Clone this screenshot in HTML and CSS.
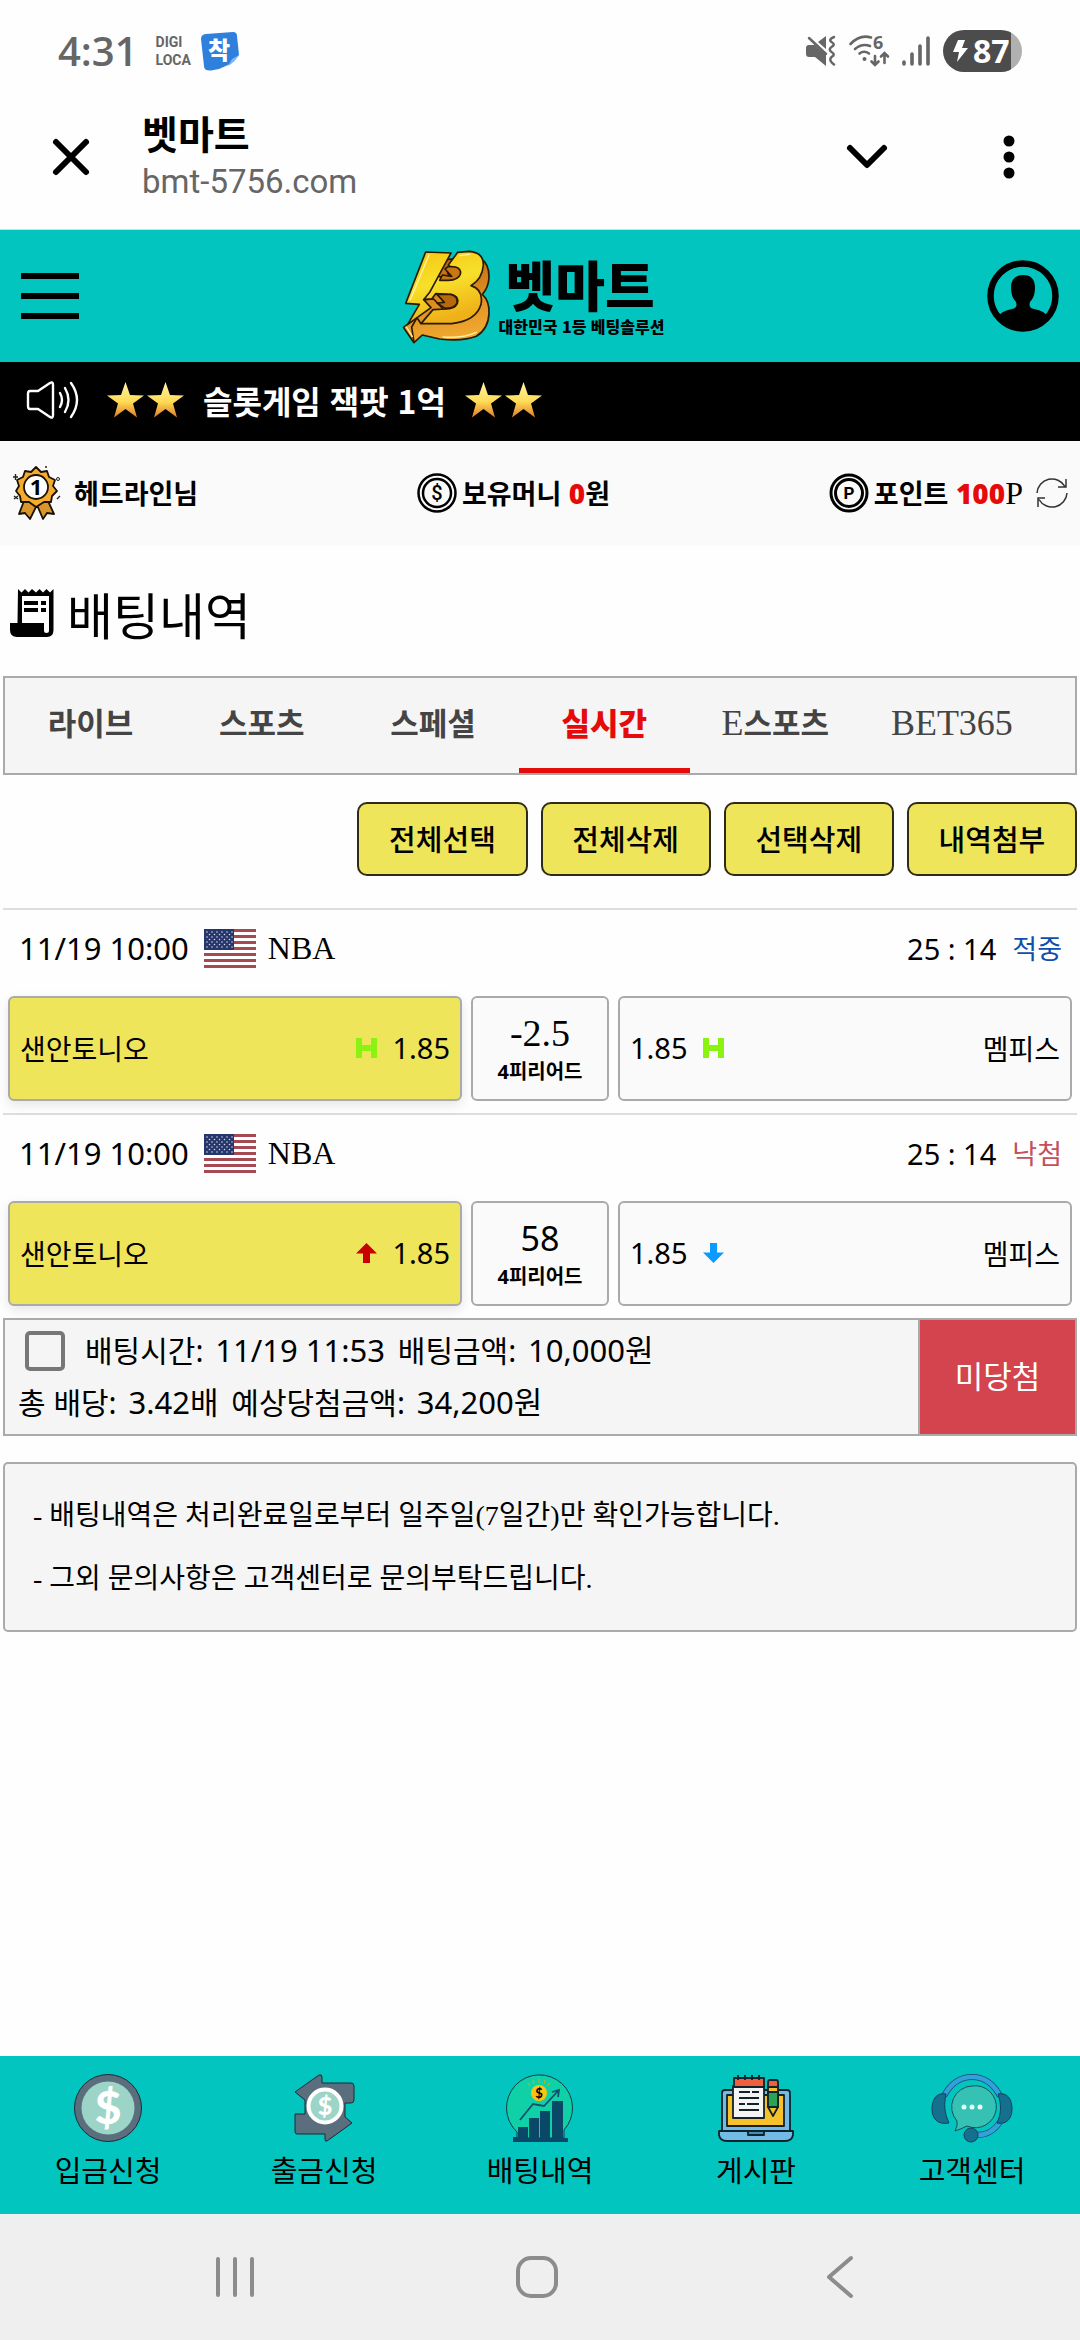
FILE: index.html
```html
<!DOCTYPE html>
<html lang="ko">
<head>
  <meta charset="UTF-8">
  <meta name="viewport" content="width=device-width, initial-scale=1.0">
  <title>벳마트</title>
  <link rel="stylesheet" href="styles.css">
</head>
<body>
  <svg class="defs" width="0" height="0" aria-hidden="true">
    <defs>
      <linearGradient id="starFill" x1="0" y1="0" x2="0" y2="1">
        <stop offset="0" stop-color="#fff3a8"/>
        <stop offset="0.55" stop-color="#ffdc55"/>
        <stop offset="1" stop-color="#e07a2c"/>
      </linearGradient>
      <linearGradient id="goldFill" x1="0" y1="0" x2="0.3" y2="1">
        <stop offset="0" stop-color="#f5c512"/>
        <stop offset="0.5" stop-color="#f7e02a"/>
        <stop offset="1" stop-color="#efb018"/>
      </linearGradient>
      <linearGradient id="amberFill" x1="0" y1="0" x2="0.2" y2="1">
        <stop offset="0" stop-color="#b8620c"/>
        <stop offset="0.6" stop-color="#dd8f22"/>
        <stop offset="1" stop-color="#f0a830"/>
      </linearGradient>
    </defs>
    <symbol id="star" viewBox="0 0 37 36">
      <path fill="url(#starFill)" d="M18.500 0 L23 13 L37 13.500 L26 21.500 L30 35.500 L18.500 27 L7 35.500 L11 21.500 L0 13.500 L14 13 Z"/>
    </symbol>
    <symbol id="flag" viewBox="0 0 52 39">
      <path fill="#fff" d="M0 0H52V39H0Z"/>
      <path stroke="#a54a52" stroke-width="3" d="M0 1.500H52M0 7.500H52M0 13.500H52M0 19.500H52M0 25.500H52M0 31.500H52M0 37.500H52"/>
      <path fill="#26366b" d="M0 0H30V21H0Z"/>
      <path stroke="#d5d9e6" stroke-width="1.600" stroke-linecap="round" stroke-dasharray="0 5" d="M3 3H29M5.500 5.500H27M3 8H29M5.500 10.500H27M3 13H29M5.500 15.500H27M3 18H29"/>
    </symbol>
    <symbol id="handi" viewBox="0 0 21 20">
      <path fill="#8bf312" d="M0 0H6V7H15V0H21V20H15V13H6V20H0Z"/>
    </symbol>
  </svg>

  <div class="status-bar">
    <div class="status-left">
      <span class="clock">4:31</span>
      <span class="digi">DIGI<br>LOCA</span>
      <svg width="38" height="39" viewBox="0 0 38 39">
        <path fill="#2f7fdc" d="M5 2 L32 0 Q36 0 36 4 L38 23 Q29 36 10 38.500 Q3 39 3 34 L0 7 Q0 2.500 5 2Z"/>
        <path fill="#7fb7f2" d="M38 23 Q33 31 27 34 L31 27Z"/>
        <text class="chak" x="7" y="27">착</text>
      </svg>
    </div>
    <div class="status-right">
      <svg width="30" height="30" viewBox="0 0 30 30">
        <path fill="#666" d="M0 12Q0 9 3 9H9L20 19V30L9 21H3Q0 21 0 18ZM12 6L20 0V13Z"/>
        <path fill="none" stroke="#666" stroke-width="2.500" stroke-linecap="round" d="M3 2L20 18M28 1Q22 3.500 25.500 6Q30 8.500 25.500 11Q22 13.500 25.500 16Q30 18.500 25.500 21Q22 24 28 28.500"/>
      </svg>
      <svg width="40" height="32" viewBox="0 0 40 32">
        <path fill="none" stroke="#666" stroke-width="2.600" stroke-linecap="round" d="M1.500 9Q11 -1 22 2.500M6 14Q13 8 21 11M10.500 18.500Q15 15 20 18.500M26 21V29.500M22.500 26.500L26 30L29.500 26.500M35.500 28V19M32 21.500L35.500 18L39 21.500"/>
        <circle cx="15.500" cy="24" r="2" fill="#666"/>
        <text class="wifi-six" x="24" y="14">6</text>
      </svg>
      <svg width="28" height="30" viewBox="0 0 28 30">
        <path stroke="#666" stroke-width="3.600" stroke-linecap="round" d="M2 26V28M10 18V28M18 10V28M26 2V28"/>
      </svg>
      <span class="battery">
        <svg width="15" height="22" viewBox="0 0 15 22"><path fill="#fff" d="M5 0H12L9 8H15L4 22L6 12H0Z"/></svg>87
      </span>
    </div>
  </div>

  <div class="browser-bar">
    <button class="plain close" aria-label="닫기">
      <svg width="36" height="36" viewBox="0 0 36 36"><path stroke="#000" stroke-width="6" stroke-linecap="round" d="M3 3L33 33M33 3L3 33"/></svg>
    </button>
    <div class="page-info">
      <strong>벳마트</strong>
      <span>bmt-5756.com</span>
    </div>
    <button class="plain" aria-label="펼치기">
      <svg width="40" height="24" viewBox="0 0 40 24"><path fill="none" stroke="#000" stroke-width="6" stroke-linecap="round" stroke-linejoin="round" d="M3 3L20 20L37 3"/></svg>
    </button>
    <button class="plain more" aria-label="더보기">
      <svg width="12" height="44" viewBox="0 0 12 44"><circle cx="6" cy="6" r="5.500"/><circle cx="6" cy="22" r="5.500"/><circle cx="6" cy="38" r="5.500"/></svg>
    </button>
  </div>

  <header class="site-header">
    <button class="plain" aria-label="메뉴">
      <svg width="58" height="46" viewBox="0 0 58 46"><path d="M0 0H58V6H0ZM0 20H58V26H0ZM0 40H58V46H0Z"/></svg>
    </button>
    <a href="#" class="logo">
      <svg width="88" height="95" viewBox="67 56 264 285">
        <g stroke="#2b1a04" stroke-width="5" stroke-linejoin="round">
          <path fill="url(#amberFill)" d="M150 90L300 82Q330 100 328 142Q326 172 308 192Q330 212 328 250Q326 296 290 318Q250 334 180 326L128 314L103 337L71 291L112 262Z"/>
          <path fill="url(#goldFill)" d="M138 65L214 68L176 138L216 148L204 128L214 112L206 104L234 66L268 63Q312 66 311 104Q308 146 274 166Q312 178 304 222Q290 272 216 280L124 280L160 238L200 236Q238 232 234 208Q230 192 204 192L168 190L156 206L132 208L154 232L84 282L119 222L78 219Z"/>
          <path fill="#c97714" d="M206 108L228 110Q246 116 242 132Q236 150 206 150L180 150L188 134L216 138L196 116Z"/>
          <path fill="#b8680f" d="M172 192L214 192Q236 198 232 218Q224 234 196 234L172 218L194 216Z"/>
        </g>
        <path fill="none" stroke="#2b1a04" stroke-width="5" stroke-linejoin="round" d="M176 138L150 186L132 208L162 206L190 236M112 262L96 290L103 337M112 262L124 280"/>
        <path fill="none" stroke="#fff3a0" stroke-width="4" stroke-linecap="round" d="M148 74L92 208M240 76L270 72M80 290L98 318M190 320Q250 324 290 306"/>
      </svg>
      <span class="logo-text">
        <strong>벳마트</strong>
        <small>대한민국 1등 베팅솔루션</small>
      </span>
    </a>
    <button class="plain" aria-label="내 정보">
      <svg width="72" height="72" viewBox="0 0 72 72">
        <circle cx="36" cy="36" r="32.500" fill="none" stroke="#000" stroke-width="6.500"/>
        <path d="M36 15Q48 15 48 28Q48 37 43 42Q41 48 47 49Q58 51 61 57Q52 71 36 71Q20 71 11 57Q14 51 25 49Q31 48 29 42Q24 37 24 28Q24 15 36 15Z"/>
      </svg>
    </button>
  </header>

  <div class="ticker">
    <svg width="54" height="38" viewBox="0 0 54 38">
      <path fill="none" stroke="#fff" stroke-width="2.400" stroke-linejoin="round" stroke-linecap="round" d="M4 10H12L24 2Q27 0 27 4V34Q27 38 24 36L12 28H4Q2 28 2 25V13Q2 10 4 10ZM34 12Q38 19 34 26M39 7Q46 19 39 31M45 2Q57 19 45 36"/>
    </svg>
    <p>
      <span class="stars"><svg width="37" height="36"><use href="#star"/></svg><svg width="37" height="36"><use href="#star"/></svg></span>
      <span>슬롯게임 잭팟 1억</span>
      <span class="stars"><svg width="37" height="36"><use href="#star"/></svg><svg width="37" height="36"><use href="#star"/></svg></span>
    </p>
  </div>

  <div class="user-bar">
    <div class="user-item name">
      <svg width="48" height="54" viewBox="0 0 48 54">
        <g stroke="#1a1205" stroke-width="1.800" stroke-linejoin="round">
          <path fill="#d9962b" d="M12 35L7 48L13 47L18 53L25 39L31 53L35 47L42 48L36 35Z"/>
          <path fill="#f5ab2e" d="M24 1L29 6L35 5L37 11L43 14L41 20L45 25L40 30L39 36L32 36L24 41L17 36L9 36L8 30L4 25L7 20L5 14L11 11L13 5L19 6Z"/>
          <circle cx="24" cy="21" r="12" fill="#fff"/>
        </g>
        <path fill="none" stroke="#222" stroke-width="1.400" d="M1 11H6M3.500 8V14M45 33L48 30M2 30L6 33M6 30L2 33M33 1H35"/>
        <circle cx="46" cy="13" r="1.500" fill="none" stroke="#222"/>
        <text class="medal-no" x="24" y="29" text-anchor="middle">1</text>
      </svg>
      <span>헤드라인님</span>
    </div>
    <div class="user-item">
      <svg width="40" height="40" viewBox="0 0 40 40">
        <g fill="none" stroke="#000"><circle cx="20" cy="20" r="18.500" stroke-width="2.500"/><circle cx="20" cy="20" r="14" stroke-width="2.500"/></g>
        <text class="coin-sign" x="20" y="27" text-anchor="middle">$</text>
      </svg>
      <span>보유머니 <b>0</b>원</span>
    </div>
    <div class="user-item">
      <svg width="40" height="40" viewBox="0 0 40 40">
        <g fill="none" stroke="#000"><circle cx="20" cy="20" r="18" stroke-width="3"/><circle cx="20" cy="20" r="13.500" stroke-width="3"/></g>
        <text class="coin-sign coin-p" x="20" y="26" text-anchor="middle">P</text>
      </svg>
      <span>포인트 <b>100</b><i>P</i></span>
      <button class="plain refresh" aria-label="새로고침">
        <svg width="32" height="32" viewBox="0 0 32 32"><path fill="none" stroke="#333" stroke-width="1.500" d="M1 16A15 15 0 0 1 29 9.500M31 16A15 15 0 0 1 3 22.500M30 2V10H22M2 30V21H9"/></svg>
      </button>
    </div>
  </div>

  <main>
    <h1>
      <svg width="44" height="48" viewBox="0 0 44 48">
        <path fill-rule="evenodd" d="M8 0L11.500 3.500L15 0L18.500 3.500L22 0L26 3.500L29.500 0L33 3.500L36.500 0L40 3.500L43.500 0V41Q43.500 48 37 48H7Q0 48 0 41V34H7.500ZM12 7V34H34V42Q34 44 36.500 44Q39 44 39 42V7Z"/>
        <path d="M14 12H28V16H14ZM31 12H36V16H31ZM14 19H28V23H14ZM31 19H36V23H31Z"/>
      </svg>
      배팅내역
    </h1>

    <nav class="tabs">
      <a href="#">라이브</a>
      <a href="#">스포츠</a>
      <a href="#">스페셜</a>
      <a href="#" class="active">실시간</a>
      <a href="#"><i>E</i>스포츠</a>
      <a href="#"><i>BET365</i></a>
    </nav>

    <div class="actions">
      <button type="button">전체선택</button>
      <button type="button">전체삭제</button>
      <button type="button">선택삭제</button>
      <button type="button">내역첨부</button>
    </div>

    <section class="bet">
      <div class="bet-head">
        <time>11/19 10:00</time>
        <svg width="52" height="39"><use href="#flag"/></svg>
        <span class="league">NBA</span>
        <span class="score">25 : 14</span>
        <span class="win">적중</span>
      </div>
      <div class="bet-row">
        <div class="cell home picked">
          <span class="team">샌안토니오</span>
          <svg width="21" height="20"><use href="#handi"/></svg>
          <span class="odds">1.85</span>
        </div>
        <div class="cell line"><span class="point serif">-2.5</span><small>4피리어드</small></div>
        <div class="cell away">
          <span class="odds">1.85</span>
          <svg width="21" height="20"><use href="#handi"/></svg>
          <span class="team">멤피스</span>
        </div>
      </div>
    </section>

    <section class="bet">
      <div class="bet-head">
        <time>11/19 10:00</time>
        <svg width="52" height="39"><use href="#flag"/></svg>
        <span class="league">NBA</span>
        <span class="score">25 : 14</span>
        <span class="lose">낙첨</span>
      </div>
      <div class="bet-row">
        <div class="cell home picked">
          <span class="team">샌안토니오</span>
          <svg width="21" height="20" viewBox="0 0 21 20"><path fill="#c90000" d="M10.500 0L21 10.500H14V20H7V10.500H0Z"/></svg>
          <span class="odds">1.85</span>
        </div>
        <div class="cell line"><span class="point">58</span><small>4피리어드</small></div>
        <div class="cell away">
          <span class="odds">1.85</span>
          <svg width="21" height="20" viewBox="0 0 21 20"><path fill="#0a9bff" d="M10.500 20L21 9.500H14V0H7V9.500H0Z"/></svg>
          <span class="team">멤피스</span>
        </div>
      </div>
    </section>

    <div class="summary">
      <div class="summary-info">
        <div class="summary-line">
          <input type="checkbox" id="bet1">
          <label for="bet1">배팅시간: <span class="val">11/19 11:53</span> 배팅금액: <span class="val">10,000원</span></label>
        </div>
        <div>총 배당: <span class="val">3.42배</span> 예상당첨금액: <span class="val">34,200원</span></div>
      </div>
      <div class="result">미당첨</div>
    </div>

    <div class="guide">
      <p>- 배팅내역은 처리완료일로부터 일주일(7일간)만 확인가능합니다.</p>
      <p>- 그외 문의사항은 고객센터로 문의부탁드립니다.</p>
    </div>
  </main>

  <nav class="bottom-menu">
    <a href="#">
      <svg width="68" height="68" viewBox="0 0 68 68">
        <circle cx="34" cy="34" r="33.500" fill="#5b6e7d" stroke="#1c2a33"/>
        <circle cx="34" cy="34" r="26.500" fill="#9cd5c8"/>
        <text class="dollar-lg" x="34" y="50" text-anchor="middle">$</text>
      </svg>
      입금신청
    </a>
    <a href="#">
      <svg width="60" height="68" viewBox="0 0 60 68">
        <path fill="#5b6e7d" stroke="#1c2a33" d="M1 18L25 1Q28 0 28 3V9H57Q60 9 60 12V26Q60 29 57 29H51V43L58 49L33 67Q31 68 31 65V60H3Q1 60 1 57V40H11V26Z"/>
        <circle cx="31" cy="32" r="16.500" fill="#9cd5c8" stroke="#fff" stroke-width="4"/>
        <text class="dollar-sm" x="31" y="41" text-anchor="middle">$</text>
      </svg>
      출금신청
    </a>
    <a href="#">
      <svg width="68" height="68" viewBox="0 0 68 68">
        <path fill="#0fd0a6" stroke="#143a44" d="M11 58A33 33 0 1 1 58 56V64H11Z"/>
        <path fill="#0a4868" d="M12 53H22V64H23V44H33V64H34V37H44V64H46V27H57V64H62V68H7V63H12Z"/>
        <path fill="none" stroke="#12506b" stroke-width="1.800" d="M14 46L27 30L38 32L52 17M46 18L53 16L52 23"/>
        <path stroke="#c6b31c" d="M24 12L22 9M28 10L27 6M33 9V5M38 10L39 6M41 12L44 9"/>
        <circle cx="33" cy="19" r="8" fill="#fcc313"/>
        <text class="dollar-xs" x="33" y="24" text-anchor="middle">$</text>
      </svg>
      배팅내역
    </a>
    <a href="#">
      <svg width="76" height="68" viewBox="0 0 76 68">
        <g stroke="#10222b" stroke-width="1.800" stroke-linejoin="round">
          <path fill="#72bbe6" d="M4 57V19Q4 16 7 16H69Q72 16 72 19V57Z"/>
          <path fill="#f6c12b" d="M9 21H66V52H9Z"/>
          <path fill="#72bbe6" d="M1 57H75V61Q74 67 67 67H9Q2 67 1 61Z"/>
          <path fill="#4190b8" d="M30 57H46V61H30Z"/>
          <path fill="#f4f4f4" d="M15 12H46V44H15Z"/>
          <path fill="#ef6040" d="M16 4H46V13H16Z"/>
          <path fill="#f6c12b" d="M50 33L55 42L60 33V12H50Z"/>
          <path fill="#2aa353" d="M50 18H60V33H50Z"/>
          <path fill="#ef6040" d="M50 8Q50 6 52 6H58Q60 6 60 8V13H50Z"/>
          <path d="M20 1V6M27 1V6M34 1V6M41 1V6M21 18H32M34 18H41M21 24H41M21 30H27M29 30H41M21 36H41"/>
        </g>
      </svg>
      게시판
    </a>
    <a href="#">
      <svg width="82" height="68" viewBox="0 0 82 68">
        <path fill="none" stroke="#1b4b6b" stroke-width="6" d="M13 22Q23 3 41 3Q59 3 69 22M69 48Q60 62 44 61"/>
        <path fill="none" stroke="#32a0dc" stroke-width="4.500" d="M13 22Q23 3 41 3Q59 3 69 22M69 48Q60 62 44 61"/>
        <path fill="#15708f" stroke="#14405a" d="M15 20C5 18 1 26 1 35C1 45 7 51 18 49C13 38 13 30 15 20ZM67 20C77 18 81 26 81 35C81 45 75 51 66 49C71 38 70 30 67 20Z"/>
        <path fill="#35c2b5" stroke="#16505c" d="M41 12A21 21 0 1 1 36 52Q30 55 24 57Q27 52 26 47A21 21 0 0 1 41 12Z"/>
        <circle cx="40" cy="61" r="7" fill="#15708f" stroke="#14405a"/>
        <g fill="#e6fbfb"><circle cx="33" cy="33" r="2.500"/><circle cx="41" cy="33" r="2.500"/><circle cx="49" cy="33" r="2.500"/></g>
      </svg>
      고객센터
    </a>
  </nav>

  <div class="system-nav">
    <button class="plain" aria-label="최근 앱"><svg width="38" height="42" viewBox="0 0 38 42"><path stroke="#8c8c8c" stroke-width="4" stroke-linecap="round" d="M2 3V39M19 3V39M36 3V39"/></svg></button>
    <button class="plain" aria-label="홈"><svg width="42" height="42" viewBox="0 0 42 42"><rect x="2" y="2" width="38" height="38" rx="13" fill="none" stroke="#8c8c8c" stroke-width="4"/></svg></button>
    <button class="plain" aria-label="뒤로"><svg width="26" height="42" viewBox="0 0 26 42"><path fill="none" stroke="#8c8c8c" stroke-width="4" stroke-linecap="round" stroke-linejoin="round" d="M24 2L2 21L24 40"/></svg></button>
  </div>
</body>
</html>
```

FILE: styles.css
```css
:root {
  --teal: #02c5bf;
  --yellow: #eee55a;
  --red: #e60b0b;
  --line: #aaaaaa;
  --gray-bg: #f5f5f5;
  --sans: "Noto Sans", "Noto Sans CJK KR", sans-serif;
  --kr: "Noto Sans CJK KR", sans-serif;
  --serif: "Liberation Serif", "Noto Sans CJK KR", serif;
}

* {
  box-sizing: border-box;
}

body {
  margin: 0;
  min-height: 100vh;
  display: flex;
  flex-direction: column;
  background: #fefefe;
  color: #000;
  font-family: var(--sans);
  font-size: 28px;
}

svg {
  display: block;
  flex: none;
  overflow: visible;
}

.defs {
  position: absolute;
}

a {
  color: inherit;
  text-decoration: none;
}

i {
  font-family: var(--serif);
  font-style: normal;
  font-weight: normal;
}

.plain {
  padding: 0;
  border: 0;
  background: none;
  cursor: pointer;
}

/* phone status bar */
.status-bar {
  height: 102px;
  padding: 0 58px;
  display: flex;
  align-items: center;
  justify-content: space-between;
  color: #666;
}

.status-left,
.status-right {
  display: flex;
  align-items: center;
}

.clock {
  font: 600 40px/48px "Open Sans", sans-serif;
}

.digi {
  width: 45px;
  margin-left: 18px;
  font: bold 14px/18px Roboto, sans-serif;
}

.chak {
  fill: #fff;
  font: 900 24px var(--kr);
}

.status-right {
  gap: 13px;
}

.wifi-six {
  fill: #666;
  font: bold 18px "Open Sans", sans-serif;
}

.battery {
  width: 79px;
  height: 42px;
  padding-left: 10px;
  display: flex;
  align-items: center;
  gap: 5px;
  border-radius: 21px;
  background: linear-gradient(to right, #4c4c4c 86%, #b0b0b0 86%);
  color: #fff;
  font: bold 32px/42px "Open Sans", sans-serif;
}

/* browser bar */
.browser-bar {
  height: 128px;
  padding: 0 65px 18px 53px;
  display: flex;
  align-items: center;
  border-bottom: 1px solid #c4e3e6;
}

.page-info {
  flex: 1;
  margin-left: 53px;
}

.page-info strong {
  display: block;
  font: bold 39px/50px var(--kr);
}

.page-info span {
  display: block;
  color: #666;
  font: 33px/50px Roboto, sans-serif;
}

.more {
  margin-left: 116px;
}

/* site header */
.site-header {
  height: 132px;
  padding: 0 21px;
  display: flex;
  align-items: center;
  justify-content: space-between;
  background: var(--teal);
}

.logo {
  display: flex;
  align-items: center;
  gap: 9px;
}

.logo-text strong {
  display: block;
  padding-left: 7px;
  font: 900 54px/60px var(--kr);
}

.logo-text small {
  display: block;
  font: 900 16px/24px var(--kr);
}

.ticker {
  height: 79px;
  padding: 0 26px 3px;
  display: flex;
  align-items: center;
  gap: 27px;
  background: #000;
  color: #fff;
  font: bold 32px/44px var(--kr);
}

.ticker p {
  margin: 0;
  display: flex;
  align-items: center;
  gap: 19px;
}

.stars {
  display: flex;
  gap: 3px;
}

.user-bar {
  height: 105px;
  padding: 0 12px 2px;
  display: flex;
  align-items: center;
  justify-content: space-between;
  background: #fafafa;
  font: bold 27px/40px var(--kr);
}

.user-item {
  display: flex;
  align-items: center;
  gap: 5px;
}

.user-item.name {
  gap: 14px;
}

.user-item b {
  color: var(--red);
  font-family: "Noto Sans", sans-serif;
  font-size: 28px;
}

.user-item i {
  font-size: 32px;
}

.medal-no {
  font: bold 22px "Noto Sans", sans-serif;
}

.coin-sign {
  font: 500 20px Roboto, sans-serif;
}

.coin-p {
  font-size: 17px;
  font-weight: bold;
}

.refresh {
  margin-left: 8px;
}

/* bet history */
main {
  flex: 1;
  padding: 0 3px;
}

h1 {
  height: 130px;
  margin: 0;
  padding: 3px 7px 0;
  display: flex;
  align-items: center;
  gap: 13px;
  font: 50px/70px var(--kr);
}

.tabs {
  height: 99px;
  display: flex;
  border: 2px solid var(--line);
  background: var(--gray-bg);
  color: #444;
  font: bold 31px/88px var(--kr);
  text-align: center;
}

.tabs a {
  width: 16%;
}

.tabs a:last-child {
  width: 17%;
}

.tabs i {
  font-size: 36px;
  line-height: 1;
}

.tabs .active {
  border-bottom: 5px solid var(--red);
  color: var(--red);
  font-weight: 900;
}

.actions {
  margin: 27px 0 32px;
  display: grid;
  grid-template-columns: repeat(4, 1fr);
  gap: 13px;
  padding-left: 33%;
}

.actions button {
  height: 74px;
  padding: 0 0 3px;
  border: 2px solid #2e2c16;
  border-radius: 10px;
  background: var(--yellow);
  color: #000;
  font: 500 29px/40px var(--kr);
  cursor: pointer;
}

.bet {
  padding-bottom: 12px;
  border-top: 2px solid #ddd;
}

.bet-head {
  height: 86px;
  padding: 0 15px 10px 16px;
  display: flex;
  align-items: center;
  font-size: 31px;
}

.bet-head svg {
  margin: 0 12px 0 15px;
}

.league {
  flex: 1;
  font-family: var(--serif);
  font-size: 32px;
}

.score {
  margin-right: 16px;
  font-size: 29px;
}

.win,
.lose {
  color: #0f4fae;
  font: 27px/40px var(--kr);
}

.lose {
  color: #c4505c;
}

.bet-row {
  padding: 0 5px;
  display: grid;
  grid-template-columns: 1fr 138px 1fr;
  gap: 9px;
}

.cell {
  height: 105px;
  padding: 0 10px 2px;
  display: flex;
  align-items: center;
  border: 2px solid var(--line);
  border-radius: 6px;
  background: #fafafa;
  font: 29px/40px "Noto Sans", sans-serif;
}

.picked {
  background: var(--yellow);
  box-shadow: 0 4px 12px rgba(0, 0, 0, 0.1);
}

.team {
  font: 28px/40px var(--kr);
}

.home .team {
  flex: 1;
}

.home svg {
  margin-right: 15px;
}

.away svg {
  margin-left: 15px;
}

.away .team {
  margin-left: auto;
}

.line {
  padding: 6px 0 0;
  flex-direction: column;
  justify-content: center;
}

.point {
  font-size: 34px;
}

.point.serif {
  font-family: var(--serif);
  font-size: 38px;
}

.line small {
  font: bold 20px/38px var(--sans);
}

.summary {
  display: flex;
  border: 2px solid var(--line);
  background: var(--gray-bg);
  font-size: 30px;
  line-height: 52px;
}

.summary-info {
  flex: 1;
  padding: 5px 13px;
}

.summary-line {
  display: flex;
  align-items: center;
}

.summary input {
  appearance: none;
  width: 40px;
  height: 40px;
  margin: 0 20px 0 7px;
  border: 4px solid #777;
  border-radius: 5px;
}

.val {
  margin: 0 5px 0 4px;
  font-size: 31px;
  line-height: 1;
}

.result {
  width: 157px;
  padding-bottom: 5px;
  display: flex;
  align-items: center;
  justify-content: center;
  border-left: 2px solid var(--line);
  background: #d4444f;
  color: #fff;
  font-family: var(--kr);
  font-size: 31px;
}

.guide {
  margin-top: 26px;
  padding: 20px 28px;
  border: 2px solid var(--line);
  border-radius: 5px;
  background: var(--gray-bg);
  font: 28px/63px var(--serif);
}

.guide p {
  margin: 0;
}

/* site menu at the bottom */
.bottom-menu {
  height: 158px;
  padding-top: 18px;
  display: grid;
  grid-template-columns: repeat(5, 1fr);
  background: var(--teal);
  font: 29px/54px var(--kr);
}

.bottom-menu a {
  display: flex;
  flex-direction: column;
  align-items: center;
}

.dollar-lg,
.dollar-sm {
  fill: #fff;
  font: 900 46px Lato, sans-serif;
}

.dollar-sm {
  font-size: 25px;
}

.dollar-xs {
  font: bold 13px Lato, sans-serif;
}

.system-nav {
  height: 126px;
  padding: 0 89px 0 84px;
  display: grid;
  grid-template-columns: repeat(3, 1fr);
  align-items: center;
  justify-items: center;
  background: #efefef;
}
```
